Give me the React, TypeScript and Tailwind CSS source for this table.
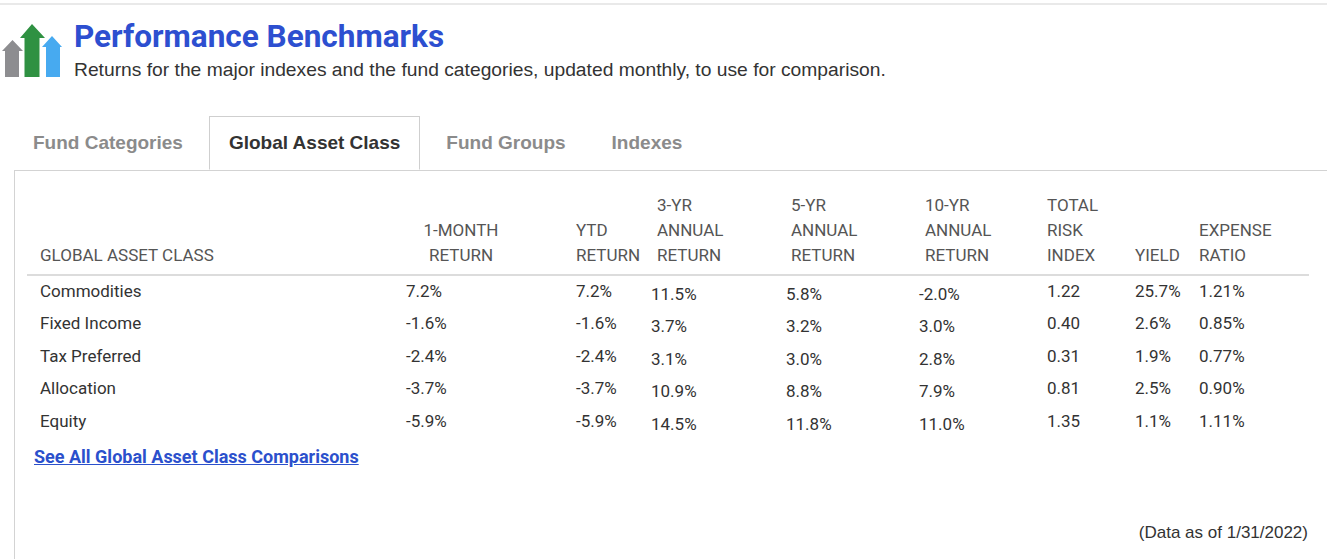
import React from "react";

const rows = [
  { name: "Commodities", m1: "7.2%", ytd: "7.2%", y3: "11.5%", y5: "5.8%", y10: "-2.0%", risk: "1.22", yld: "25.7%", exp: "1.21%" },
  { name: "Fixed Income", m1: "-1.6%", ytd: "-1.6%", y3: "3.7%", y5: "3.2%", y10: "3.0%", risk: "0.40", yld: "2.6%", exp: "0.85%" },
  { name: "Tax Preferred", m1: "-2.4%", ytd: "-2.4%", y3: "3.1%", y5: "3.0%", y10: "2.8%", risk: "0.31", yld: "1.9%", exp: "0.77%" },
  { name: "Allocation", m1: "-3.7%", ytd: "-3.7%", y3: "10.9%", y5: "8.8%", y10: "7.9%", risk: "0.81", yld: "2.5%", exp: "0.90%" },
  { name: "Equity", m1: "-5.9%", ytd: "-5.9%", y3: "14.5%", y5: "11.8%", y10: "11.0%", risk: "1.35", yld: "1.1%", exp: "1.11%" },
];

const tabs = ["Fund Categories", "Global Asset Class", "Fund Groups", "Indexes"];

function Logo() {
  return (
    <svg width="64" height="56" viewBox="0 22 64 56" className="shrink-0">
      {/* gray arrow */}
      <polygon points="12.5,40 23,51 19,51 19,77 5,77 5,51 2,51" fill="#8d8d90" />
      {/* green arrow */}
      <polygon points="32,24 45,38 39.5,38 39.5,77 24.5,77 24.5,38 20,38" fill="#2f9142" />
      {/* blue arrow */}
      <polygon points="52,36 62,47 60,47 60,77 46,77 46,47 42,47" fill="#47aaf0" />
    </svg>
  );
}

export default function App() {
  return (
    <div className="w-[1327px] h-[559px] bg-white overflow-hidden font-['Roboto',sans-serif] text-[#555]">
      <div className="h-[3px]" />
      <div className="h-[2px] bg-[#e9e9e9]" />

      {/* Header */}
      <div className="flex items-start pt-[14px]">
        <div className="pt-[3px]">
          <Logo />
        </div>
        <div className="ml-[10px]">
          <h1 className="text-[31.5px] leading-[36px] font-bold text-[#2d4fd0]">
            Performance Benchmarks
          </h1>
          <p className="mt-[4px] text-[19.25px] leading-[22px] text-[#333] font-['Liberation_Sans',Arial,sans-serif]">
            Returns for the major indexes and the fund categories, updated monthly, to use for comparison.
          </p>
        </div>
      </div>

      {/* Tabs */}
      <div className="mt-[35px] flex pl-[13px] gap-[6px] relative z-10">
        {tabs.map((t, i) => (
          <div
            key={t}
            className={
              i === 1
                ? "h-[54px] px-[19px] flex items-center text-[19px] font-bold text-[#333] border border-[#cfcfcf] border-b-white bg-white font-['Liberation_Sans',Arial,sans-serif] -mb-px"
                : "h-[54px] px-[19px] flex items-center text-[19px] font-bold text-[#8b8b8b] border border-transparent font-['Liberation_Sans',Arial,sans-serif]"
            }
          >
            {t}
          </div>
        ))}
      </div>

      {/* Panel */}
      <div className="ml-[14px] border-l border-t border-[#d3d3d3] h-[400px] pt-[22px] pl-[12px] pr-[19px]">
        <table className="table-fixed border-collapse w-[1282px] text-[17px]">
          <colgroup>
            <col className="w-[374px]" />
            <col className="w-[170px]" />
            <col className="w-[80px]" />
            <col className="w-[135px]" />
            <col className="w-[133px]" />
            <col className="w-[122px]" />
            <col className="w-[88px]" />
            <col className="w-[65px]" />
            <col className="w-[115px]" />
          </colgroup>
          <thead>
            <tr className="border-b-2 border-[#dcdcdc] align-bottom text-left leading-[25px] text-[#555]">
              <th className="font-normal pl-[13px] pb-[6px]">GLOBAL ASSET CLASS</th>
              <th className="font-normal text-center pr-[50px] pb-[6px]">1-MONTH<br />RETURN</th>
              <th className="font-normal pl-[5px] pb-[6px]">YTD<br />RETURN</th>
              <th className="font-normal pl-[6px] pb-[6px]">3-YR<br />ANNUAL<br />RETURN</th>
              <th className="font-normal pl-[5px] pb-[6px]">5-YR<br />ANNUAL<br />RETURN</th>
              <th className="font-normal pl-[6px] pb-[6px]">10-YR<br />ANNUAL<br />RETURN</th>
              <th className="font-normal pl-[6px] pb-[6px]">TOTAL<br />RISK<br />INDEX</th>
              <th className="font-normal pl-[6px] pb-[6px]">YIELD</th>
              <th className="font-normal pl-[5px] pb-[6px]">EXPENSE<br />RATIO</th>
            </tr>
          </thead>
          <tbody className="text-[#333]">
            {rows.map((r) => (
              <tr key={r.name} className="h-[32.5px] align-middle">
                <td className="pl-[13px]">{r.name}</td>
                <td className="pl-[5px]">{r.m1}</td>
                <td className="pl-[5px]">{r.ytd}</td>
                <td className="pt-[6px]">{r.y3}</td>
                <td className="pt-[6px]">{r.y5}</td>
                <td className="pt-[6px]">{r.y10}</td>
                <td className="pl-[6px]">{r.risk}</td>
                <td className="pl-[6px]">{r.yld}</td>
                <td className="pl-[5px]">{r.exp}</td>
              </tr>
            ))}
          </tbody>
        </table>

        <a href="#" className="block mt-[7px] ml-[7px] text-[18px] leading-[24px] font-bold text-[#2b50cc] underline w-fit">
          See All Global Asset Class Comparisons
        </a>

        <p className="mt-[54px] text-right text-[17px] leading-[20px] text-[#333] font-['Liberation_Sans',Arial,sans-serif]">
          (Data as of 1/31/2022)
        </p>
      </div>
    </div>
  );
}
